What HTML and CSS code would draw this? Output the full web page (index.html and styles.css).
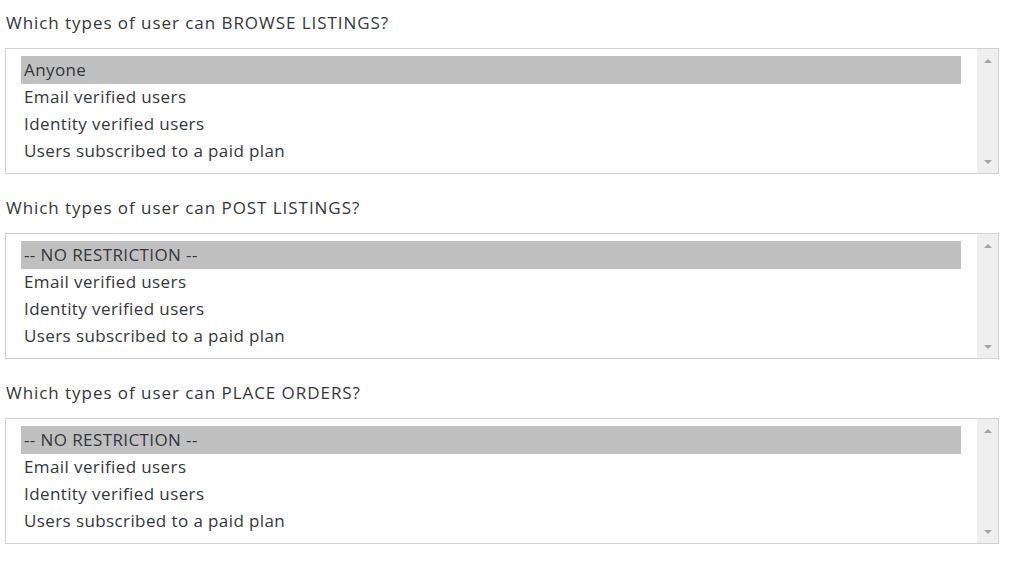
FILE: index.html
```html
<!DOCTYPE html>
<html lang="en">
<head>
<meta charset="utf-8">
<title>User permissions</title>
<link rel="stylesheet" href="styles.css">
</head>
<body>
<div class="form">
  <div class="field">
    <div class="label">Which types of user can BROWSE LISTINGS?</div>
    <div class="listbox">
      <div class="options">
        <div class="opt selected">Anyone</div>
        <div class="opt">Email verified users</div>
        <div class="opt">Identity verified users</div>
        <div class="opt">Users subscribed to a paid plan</div>
      </div>
      <div class="scrollbar">
        <span class="arrow up"></span>
        <span class="arrow down"></span>
      </div>
    </div>
  </div>
  <div class="field">
    <div class="label">Which types of user can POST LISTINGS?</div>
    <div class="listbox">
      <div class="options">
        <div class="opt selected">-- NO RESTRICTION --</div>
        <div class="opt">Email verified users</div>
        <div class="opt">Identity verified users</div>
        <div class="opt">Users subscribed to a paid plan</div>
      </div>
      <div class="scrollbar">
        <span class="arrow up"></span>
        <span class="arrow down"></span>
      </div>
    </div>
  </div>
  <div class="field">
    <div class="label">Which types of user can PLACE ORDERS?</div>
    <div class="listbox">
      <div class="options">
        <div class="opt selected">-- NO RESTRICTION --</div>
        <div class="opt">Email verified users</div>
        <div class="opt">Identity verified users</div>
        <div class="opt">Users subscribed to a paid plan</div>
      </div>
      <div class="scrollbar">
        <span class="arrow up"></span>
        <span class="arrow down"></span>
      </div>
    </div>
  </div>
</div>
</body>
</html>
```
FILE: styles.css
```css
html, body {
  margin: 0;
  padding: 0;
  background: #ffffff;
}
body {
  font-family: "Open Sans", "Liberation Sans", sans-serif;
  font-size: 17px;
  color: #33373b;
}
.form {
  padding: 12px 25px 0 5px;
  display: flex;
  flex-direction: column;
  gap: 23px;
}
.label {
  line-height: 22px;
  padding-left: 1px;
  margin-bottom: 14px;
  letter-spacing: 0.95px;
}
.listbox {
  display: flex;
  border: 1px solid #cdd1d6;
  height: 126px;
  box-sizing: border-box;
}
.options {
  flex: 1;
  padding: 7px 16px 7px 15px;
}
.opt {
  height: 27px;
  line-height: 26px;
  padding-left: 3px;
  box-sizing: border-box;
  padding-bottom: 1px;
  white-space: nowrap;
  letter-spacing: 0.4px;
}
.opt.selected {
  height: 28px;
  line-height: 27px;
  background: #c0c0c0;
}
.scrollbar {
  width: 21px;
  background: #efefef;
  display: flex;
  flex-direction: column;
  justify-content: space-between;
  align-items: center;
  padding: 10px 0 9px;
}
.arrow {
  width: 0;
  height: 0;
  border-left: 4.5px solid transparent;
  border-right: 4.5px solid transparent;
}
.arrow.up {
  border-bottom: 4px solid #a3a3a3;
}
.arrow.down {
  border-top: 4px solid #a3a3a3;
}
```
